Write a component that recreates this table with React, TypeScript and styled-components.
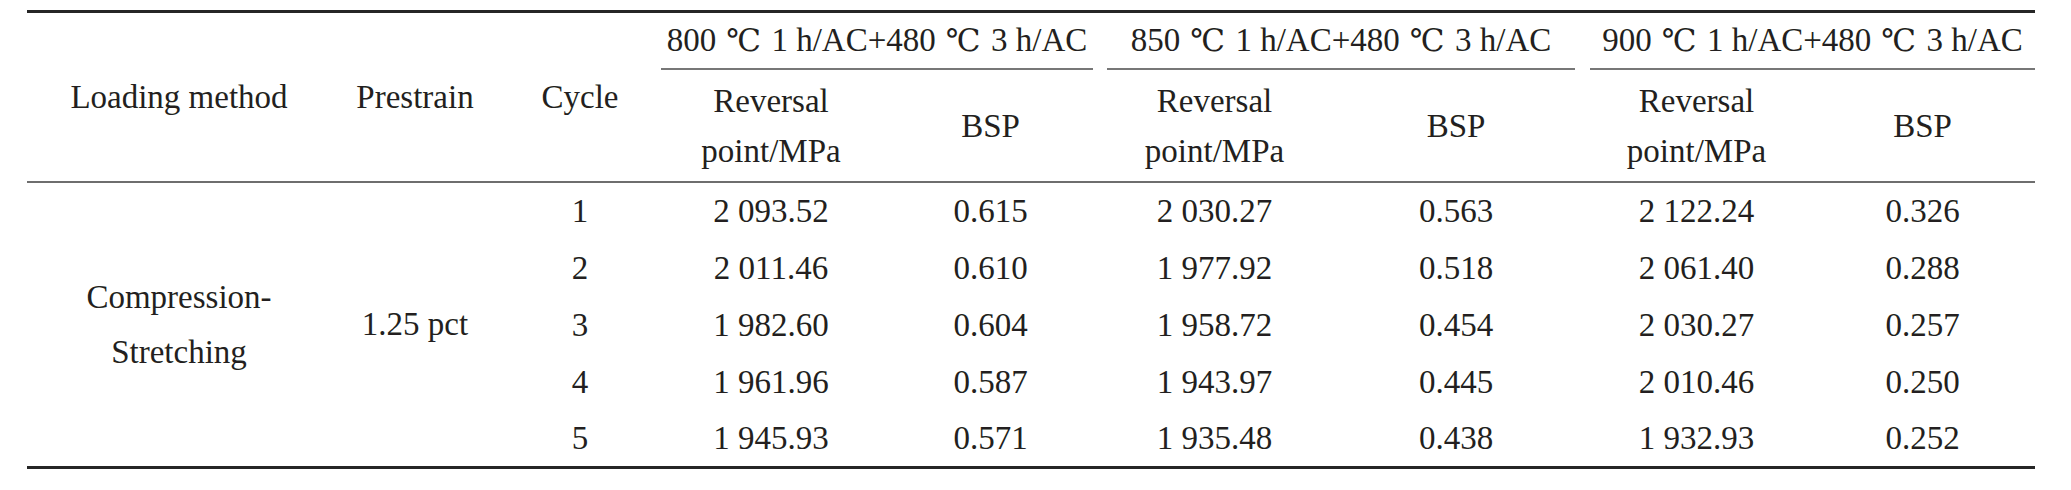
import React from "react";
import styled, { createGlobalStyle } from "styled-components";

const GlobalStyle = createGlobalStyle`
  html, body {
    margin: 0;
    padding: 0;
    background: #ffffff;
  }
  body {
    font-family: "Liberation Serif", "Noto Sans CJK SC", serif;
    color: #231f20;
  }
`;

type Group = {
  temp: string;
  trimLeft: number;
  trimRight: number;
};

type DataRow = {
  cycle: number;
  values: string[];
};

const COLUMN_WIDTHS = [304, 168, 162, 220, 219, 229, 254, 227, 225];

const GROUPS: Group[] = [
  { temp: "800", trimLeft: 0, trimRight: 7 },
  { temp: "850", trimLeft: 7, trimRight: 8 },
  { temp: "900", trimLeft: 7, trimRight: 0 },
];

const ROWS: DataRow[] = [
  { cycle: 1, values: ["2 093.52", "0.615", "2 030.27", "0.563", "2 122.24", "0.326"] },
  { cycle: 2, values: ["2 011.46", "0.610", "1 977.92", "0.518", "2 061.40", "0.288"] },
  { cycle: 3, values: ["1 982.60", "0.604", "1 958.72", "0.454", "2 030.27", "0.257"] },
  { cycle: 4, values: ["1 961.96", "0.587", "1 943.97", "0.445", "2 010.46", "0.250"] },
  { cycle: 5, values: ["1 945.93", "0.571", "1 935.48", "0.438", "1 932.93", "0.252"] },
];

const App: React.FC = () => {
  return (
    <>
      <GlobalStyle />
      <Page>
        <Table>
          <colgroup>
            {COLUMN_WIDTHS.map((w, i) => (
              <col key={i} style={{ width: w }} />
            ))}
          </colgroup>
          <thead>
            <GroupRow>
              <SpanHead rowSpan={2}>Loading method</SpanHead>
              <SpanHead rowSpan={2}>Prestrain</SpanHead>
              <SpanHead rowSpan={2}>Cycle</SpanHead>
              {GROUPS.map((g) => (
                <GroupHead key={g.temp} colSpan={2}>
                  <GroupTitle $trimLeft={g.trimLeft} $trimRight={g.trimRight}>
                    {g.temp} <Celsius>℃</Celsius> 1 h/AC+480 <Celsius>℃</Celsius> 3 h/AC
                  </GroupTitle>
                </GroupHead>
              ))}
            </GroupRow>
            <SubRow>
              {GROUPS.map((g) => (
                <React.Fragment key={g.temp}>
                  <SubHead>
                    Reversal
                    <br />
                    point/MPa
                  </SubHead>
                  <SubHead>BSP</SubHead>
                </React.Fragment>
              ))}
            </SubRow>
          </thead>
          <tbody>
            {ROWS.map((row, i) => (
              <BodyRow key={row.cycle} $last={i === ROWS.length - 1}>
                {i === 0 && (
                  <>
                    <MethodCell rowSpan={ROWS.length}>
                      Compression-
                      <br />
                      Stretching
                    </MethodCell>
                    <MethodCell rowSpan={ROWS.length}>1.25 pct</MethodCell>
                  </>
                )}
                <Cell>{row.cycle}</Cell>
                {row.values.map((v, j) => (
                  <Cell key={j}>{v}</Cell>
                ))}
              </BodyRow>
            ))}
          </tbody>
        </Table>
      </Page>
    </>
  );
};

export default App;

const Page = styled.div`
  width: 2071px;
  height: 490px;
  padding: 10px 0 0 27px;
  box-sizing: border-box;
  overflow: hidden;
`;

const Table = styled.table`
  width: 2008px;
  table-layout: fixed;
  border-collapse: separate;
  border-spacing: 0;
  border-top: 3px solid #262626;
  border-bottom: 3px solid #262626;
  font-family: "Liberation Serif", "Noto Sans CJK SC", serif;
  font-size: 33px;
  line-height: 1;
  color: #231f20;
  text-align: center;
`;

const GroupRow = styled.tr`
  height: 57px;
`;

const SubRow = styled.tr`
  height: 113px;
`;

const SpanHead = styled.th`
  font-weight: 400;
  padding: 0;
  vertical-align: middle;
  white-space: nowrap;
  border-bottom: 2px solid #6e6e6e;
`;

const GroupHead = styled.th`
  font-weight: 400;
  padding: 0;
  vertical-align: top;
`;

const GroupTitle = styled.div<{ $trimLeft: number; $trimRight: number }>`
  height: 57px;
  box-sizing: border-box;
  display: flex;
  align-items: center;
  justify-content: center;
  white-space: pre;
  margin-left: ${({ $trimLeft }) => $trimLeft}px;
  margin-right: ${({ $trimRight }) => $trimRight}px;
  border-bottom: 2px solid #777777;
`;

const Celsius = styled.span`
  font-family: "DejaVu Serif", "Noto Sans CJK SC", serif;
  font-size: 31px;
  padding: 0 2px;
`;

const SubHead = styled.th`
  font-weight: 400;
  padding: 0;
  line-height: 50px;
  vertical-align: middle;
  white-space: nowrap;
  border-bottom: 2px solid #6e6e6e;
`;

const BodyRow = styled.tr<{ $last: boolean }>`
  height: ${({ $last }) => ($last ? 55 : 57)}px;
`;

const Cell = styled.td`
  padding: 0;
  vertical-align: middle;
  white-space: nowrap;
`;

const MethodCell = styled.td`
  padding: 0;
  line-height: 55px;
  vertical-align: middle;
  white-space: nowrap;
`;
